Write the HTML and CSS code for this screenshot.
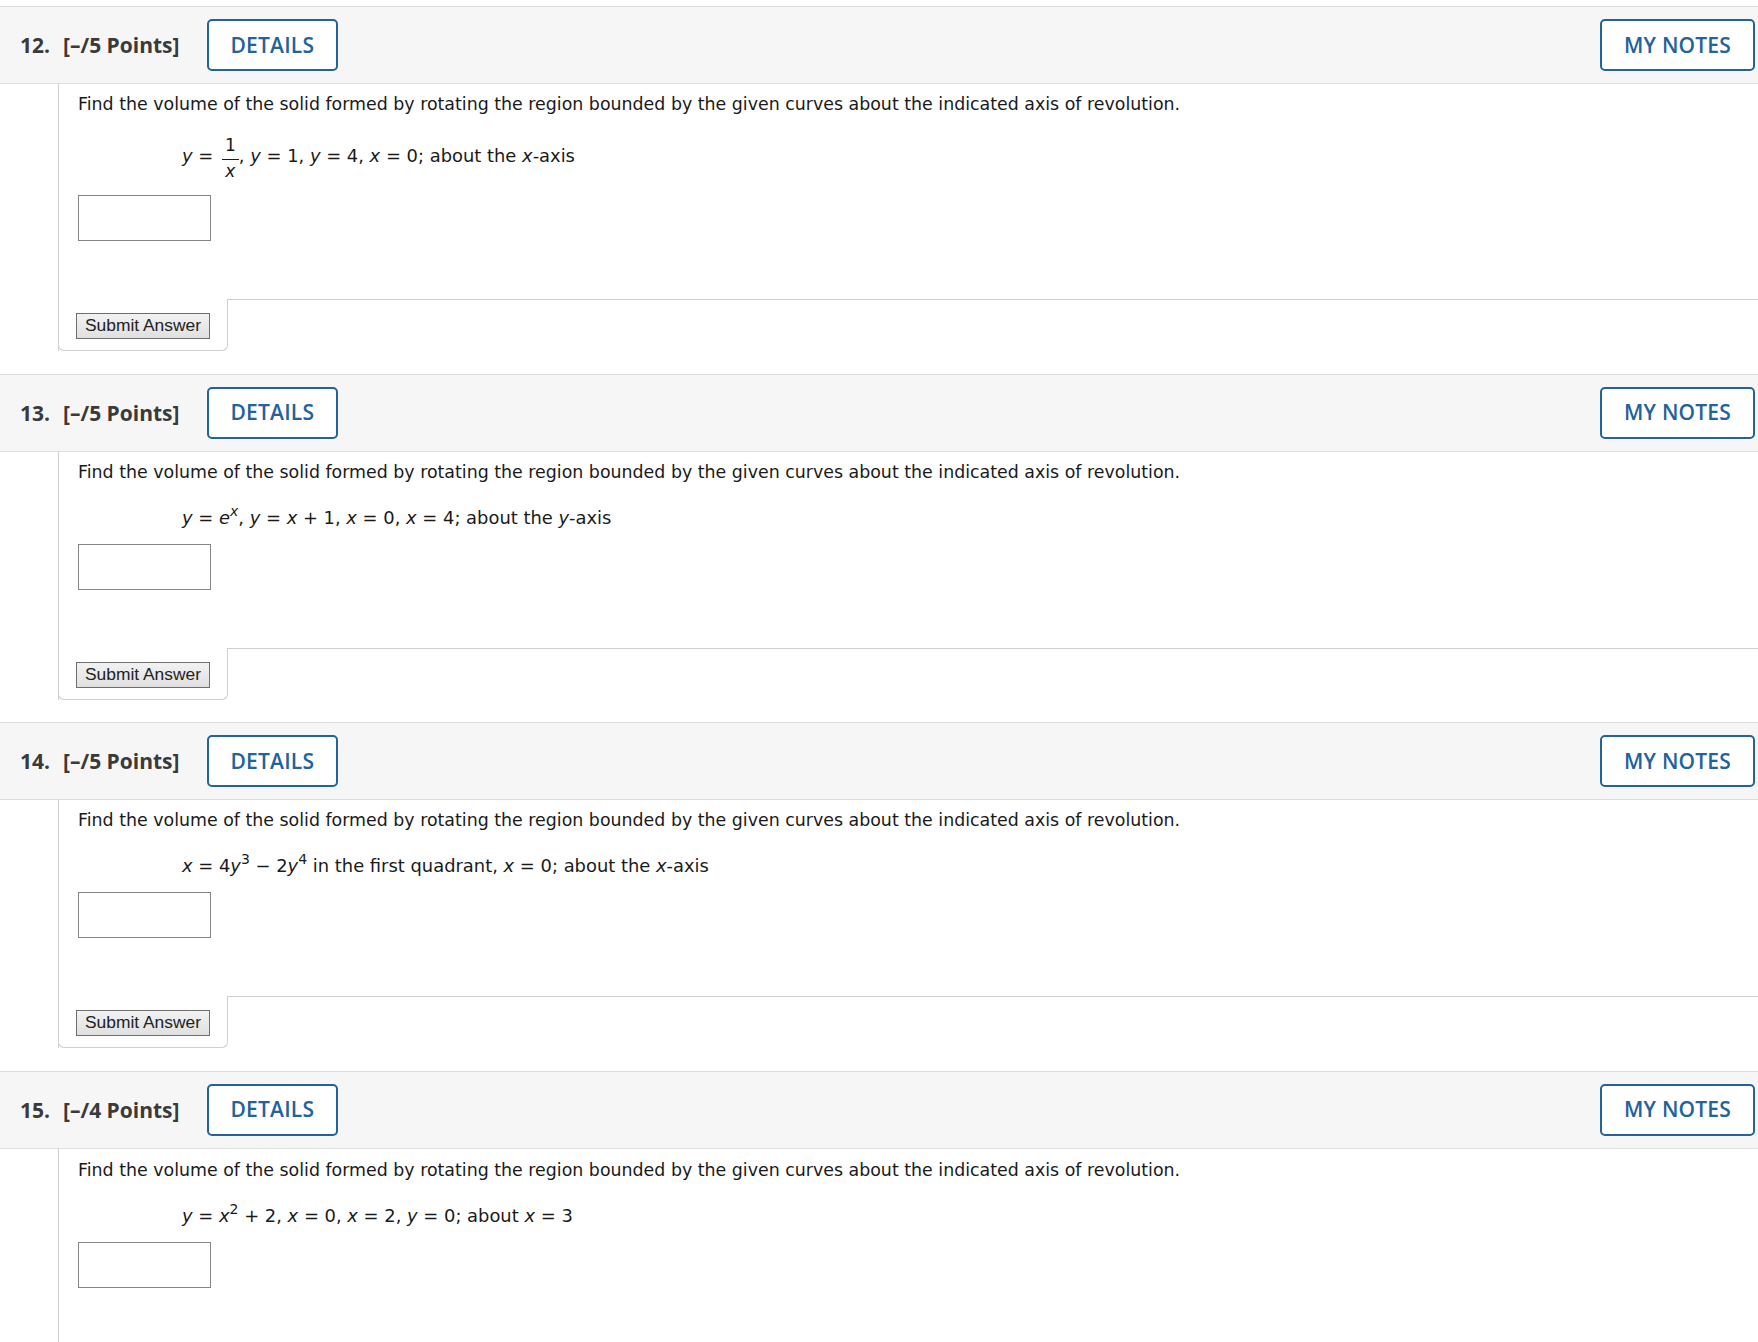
FILE: index.html
```html
<!DOCTYPE html>
<html>
<head>
<meta charset="utf-8">
<link rel="stylesheet" href="styles.css">
</head>
<body>
<main class="page">

<section class="q">
  <div class="q-head">
    <div class="q-title">
      <span class="q-num">12.</span>
      <span class="q-pts">[–/5 Points]</span>
      <button class="btn">DETAILS</button>
    </div>
    <button class="btn">MY NOTES</button>
  </div>
  <div class="q-body">
    <p class="q-text">Find the volume of the solid formed by rotating the region bounded by the given curves about the indicated axis of revolution.</p>
    <p class="q-eq q-eq-frac"><i>y</i> = <span class="frac"><span class="num">1</span><span class="den"><i>x</i></span></span>, <i>y</i> = 1, <i>y</i> = 4, <i>x</i> = 0; about the <i>x</i>-axis</p>
    <input class="q-input q-input-frac" type="text">
    <div class="q-foot">
      <div class="q-tab"><button class="submit">Submit Answer</button></div>
      <div class="q-rule"></div>
    </div>
  </div>
</section>

<section class="q">
  <div class="q-head">
    <div class="q-title">
      <span class="q-num">13.</span>
      <span class="q-pts">[–/5 Points]</span>
      <button class="btn">DETAILS</button>
    </div>
    <button class="btn">MY NOTES</button>
  </div>
  <div class="q-body">
    <p class="q-text">Find the volume of the solid formed by rotating the region bounded by the given curves about the indicated axis of revolution.</p>
    <p class="q-eq"><i>y</i> = <i>e</i><sup><i>x</i></sup>, <i>y</i> = <i>x</i> + 1, <i>x</i> = 0, <i>x</i> = 4; about the <i>y</i>-axis</p>
    <input class="q-input" type="text">
    <div class="q-foot">
      <div class="q-tab"><button class="submit">Submit Answer</button></div>
      <div class="q-rule"></div>
    </div>
  </div>
</section>

<section class="q">
  <div class="q-head">
    <div class="q-title">
      <span class="q-num">14.</span>
      <span class="q-pts">[–/5 Points]</span>
      <button class="btn">DETAILS</button>
    </div>
    <button class="btn">MY NOTES</button>
  </div>
  <div class="q-body">
    <p class="q-text">Find the volume of the solid formed by rotating the region bounded by the given curves about the indicated axis of revolution.</p>
    <p class="q-eq"><i>x</i> = 4<i>y</i><sup>3</sup> − 2<i>y</i><sup>4</sup> in the first quadrant, <i>x</i> = 0; about the <i>x</i>-axis</p>
    <input class="q-input" type="text">
    <div class="q-foot">
      <div class="q-tab"><button class="submit">Submit Answer</button></div>
      <div class="q-rule"></div>
    </div>
  </div>
</section>

<section class="q q-last">
  <div class="q-head">
    <div class="q-title">
      <span class="q-num">15.</span>
      <span class="q-pts">[–/4 Points]</span>
      <button class="btn">DETAILS</button>
    </div>
    <button class="btn">MY NOTES</button>
  </div>
  <div class="q-body q-body-last">
    <p class="q-text">Find the volume of the solid formed by rotating the region bounded by the given curves about the indicated axis of revolution.</p>
    <p class="q-eq"><i>y</i> = <i>x</i><sup>2</sup> + 2, <i>x</i> = 0, <i>x</i> = 2, <i>y</i> = 0; about <i>x</i> = 3</p>
    <input class="q-input" type="text">
    <div class="q-spacer"></div>
  </div>
</section>

</main>
</body>
</html>
```

FILE: styles.css
```css
html, body {
  margin: 0;
  padding: 0;
  background: #ffffff;
}

.page {
  padding-top: 6px;
  overflow: hidden;
  height: 1336px;
}

.q {
  margin-bottom: 22.5px;
}

.q-head {
  display: flex;
  align-items: center;
  justify-content: space-between;
  background: #f6f6f6;
  border-top: 1px solid #dedede;
  border-bottom: 1px solid #dedede;
  padding: 12px 3px 12px 20px;
}

.q-title {
  display: flex;
  align-items: center;
}

.q-num,
.q-pts {
  font-family: "Open Sans", sans-serif;
  font-weight: 700;
  font-size: 21px;
  color: #3a3a3a;
}

.q-num {
  margin-right: 13px;
}

.q-pts {
  margin-right: 27px;
}

.btn {
  font-family: "Open Sans", sans-serif;
  font-weight: 600;
  font-size: 21px;
  color: #23629a;
  background: #ffffff;
  border: 2px solid #23629a;
  border-radius: 5px;
  height: 52px;
  padding: 0 22px;
  line-height: 1;
  letter-spacing: 0.2px;
}

.q-body {
  margin-left: 58px;
  border-left: 1px solid #cfcfcf;
  padding-top: 10px;
  font-family: "DejaVu Sans", Verdana, sans-serif;
  font-size: 17.4px;
  color: #1a1a1a;
}

.q-body-last {
  padding-top: 11px;
}

.q-text {
  margin: 0 0 0 19px;
  line-height: 20px;
}

.q-eq {
  margin: 26px 0 0 123px;
  line-height: 20px;
  font-size: 17.9px;
}

.q-eq i {
  font-style: italic;
}

.q-eq sup {
  font-size: 14px;
  line-height: 0;
  vertical-align: 0.55em;
}

.q-eq-frac {
  margin-top: 20px;
}

.frac {
  display: inline-flex;
  flex-direction: column;
  align-items: center;
  vertical-align: middle;
  position: relative;
  top: 1px;
  margin: 0 0 0 3px;
  font-size: 17px;
}

.frac .num {
  border-bottom: 1px solid #1a1a1a;
  padding: 0 3px 4px;
  line-height: 20px;
}

.frac .den {
  padding-top: 1px;
  line-height: 20px;
}

.q-input {
  display: block;
  margin: 16px 0 0 19px;
  width: 133px;
  height: 46px;
  box-sizing: border-box;
  border: 1px solid #858585;
  background: #ffffff;
  padding: 0;
}

.q-input-frac {
  margin-top: 15px;
}

.q-foot {
  display: flex;
  margin-top: 58px;
  margin-left: -1px;
}

.q-tab {
  width: 170px;
  box-sizing: border-box;
  border: 1px solid #cfcfcf;
  border-top: none;
  border-radius: 0 0 6px 6px;
  padding: 14px 0 11px 17px;
  background: #ffffff;
}

.q-rule {
  flex: 1;
  border-top: 1px solid #cfcfcf;
}

.submit {
  display: block;
  font-family: "Liberation Sans", Arial, sans-serif;
  font-size: 17.4px;
  color: #222222;
  background: linear-gradient(#f2f2f2, #e0e0e0);
  border: 1px solid #6e6e6e;
  border-radius: 0;
  width: 134px;
  height: 26px;
  padding: 0;
  line-height: 1;
}

.q-spacer {
  height: 300px;
}
```
